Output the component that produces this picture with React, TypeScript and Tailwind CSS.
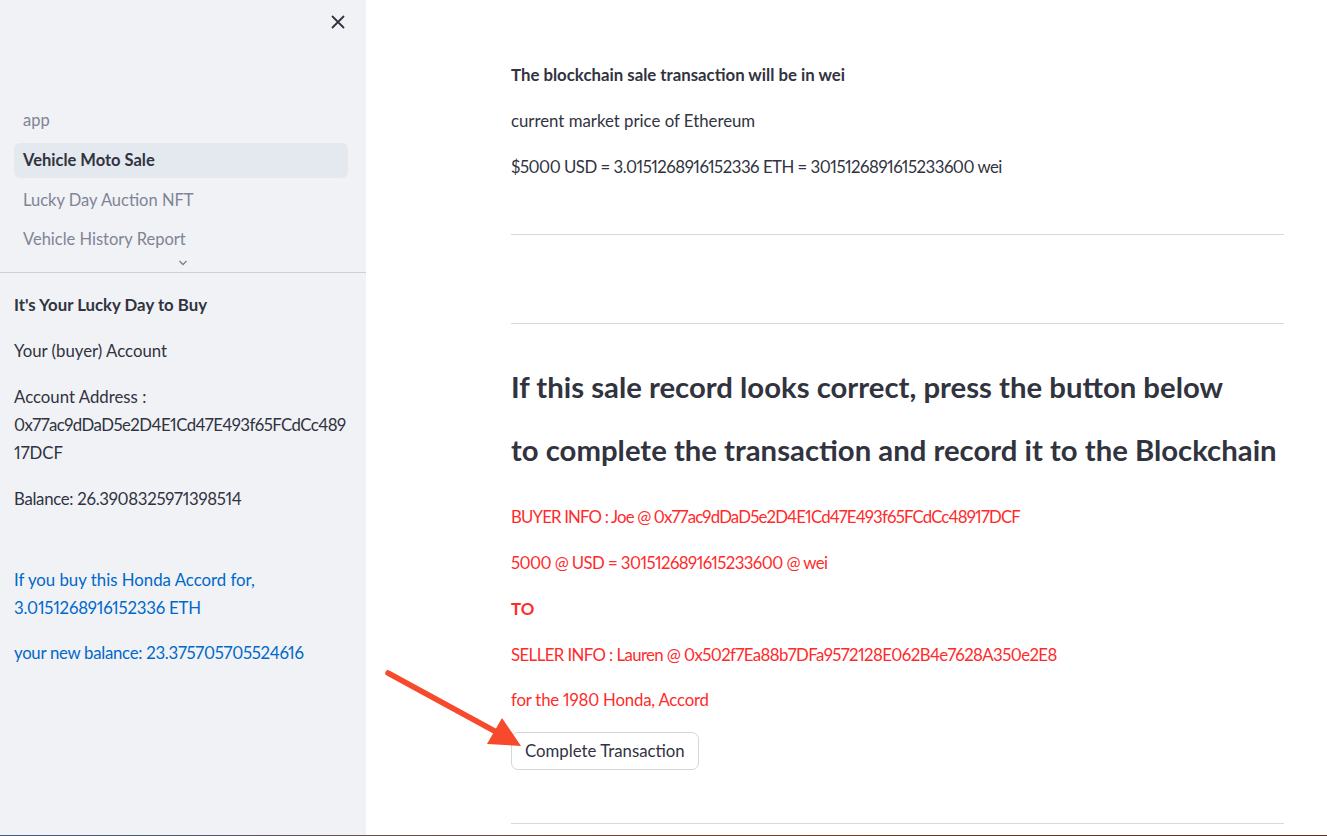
import React from "react";

const font = { fontFamily: '"Source Sans Pro", Lato, "Noto Sans", sans-serif' };

function NavItem({ label, active }: { label: string; active?: boolean }) {
  return (
    <div
      className={
        "h-[35px] flex items-center px-[9px] rounded-[6px] text-[16.5px] " +
        (active ? "bg-[#e4e8ef] text-[#31333f] font-bold" : "text-[#808495]")
      }
    >
      {label}
    </div>
  );
}

export default function App() {
  return (
    <div className="w-[1327px] h-[836px] flex flex-col overflow-hidden bg-white text-[#31333f] proportional-nums" style={font}>
      <div className="relative flex flex-1 min-h-0">
        {/* Sidebar */}
        <aside className="w-[366px] shrink-0 bg-[#f0f2f6] flex flex-col">
          <div className="h-[44px] flex items-center justify-end pr-[20px]">
            <svg width="16" height="16" viewBox="0 0 16 16" fill="none" stroke="#31333f" strokeWidth="1.8" strokeLinecap="round">
              <path d="M2.5 2.5 L13.5 13.5 M13.5 2.5 L2.5 13.5" />
            </svg>
          </div>
          <nav className="mt-[59px] px-[14px] pr-[18px] flex flex-col gap-[4.7px]">
            <NavItem label="app" />
            <NavItem label="Vehicle Moto Sale" active />
            <NavItem label="Lucky Day Auction NFT" />
            <NavItem label="Vehicle History Report" />
          </nav>
          <div className="h-[12px] flex items-center justify-center">
            <svg width="10" height="6" viewBox="0 0 10 6" fill="none" stroke="#7c7f8a" strokeWidth="1.3">
              <path d="M1.5 1 L5 4.5 L8.5 1" />
            </svg>
          </div>
          <div className="border-t border-[#cfd1d6] mt-[3px]" />
          <div className="px-[14px] pt-[18px] text-[16.8px] leading-[28px] flex flex-col">
            <p className="font-bold">It's Your Lucky Day to Buy</p>
            <p className="mt-[18px]">Your (buyer) Account</p>
            <p className="mt-[18px]">
              Account Address :<br />
              <span className="tracking-[-0.55px]">0x77ac9dDaD5e2D4E1Cd47E493f65FCdCc489</span>
              <br />
              17DCF
            </p>
            <p className="mt-[18px] tracking-[-0.3px]">Balance: 26.3908325971398514</p>
            <p className="mt-[53px] text-[#0068c9]">
              If you buy this Honda Accord for,
              <br />
              <span className="tracking-[-0.2px]">3.0151268916152336 ETH</span>
            </p>
            <p className="mt-[17px] text-[#0068c9] tracking-[-0.28px]">your new balance: 23.375705705524616</p>
          </div>
        </aside>

        {/* Main */}
        <main className="flex-1 pl-[145px] pr-[43px] pt-[61px]">
          <div className="flex flex-col text-[16.8px] leading-[28px]">
            <p className="font-bold">The blockchain sale transaction will be in wei</p>
            <p className="mt-[18px]">current market price of Ethereum</p>
            <p className="mt-[18px] tracking-[-0.5px]">$5000 USD = 3.0151268916152336 ETH = 3015126891615233600 wei</p>
            <hr className="mt-[53px] border-0 border-t border-[#d9d9dc]" />
            <hr className="mt-[88px] border-0 border-t border-[#d9d9dc]" />
            <h2 className="mt-[31px] h-[63px] flex items-center text-[29.3px] font-bold whitespace-nowrap">
              If this sale record looks correct, press the button below
            </h2>
            <h2 className="h-[63px] flex items-center text-[29.3px] font-bold whitespace-nowrap">
              to complete the transaction and record it to the Blockchain
            </h2>
            <div className="text-[#ff2b2b] flex flex-col">
              <p className="mt-[22px] tracking-[-0.83px]">BUYER INFO : Joe @ 0x77ac9dDaD5e2D4E1Cd47E493f65FCdCc48917DCF</p>
              <p className="mt-[18px] tracking-[-0.58px]">5000 @ USD = 3015126891615233600 @ wei</p>
              <p className="mt-[18px] font-bold">TO</p>
              <p className="mt-[18px] tracking-[-0.59px]">SELLER INFO : Lauren @ 0x502f7Ea88b7DFa9572128E062B4e7628A350e2E8</p>
              <p className="mt-[17px] tracking-[-0.2px]">for the 1980 Honda, Accord</p>
            </div>
            <div className="mt-[18px]">
              <button className="h-[38px] px-[13px] border border-[#d6d6d9] rounded-[7px] bg-white text-[16.8px] text-[#31333f]">
                Complete Transaction
              </button>
            </div>
            <hr className="mt-[53px] border-0 border-t border-[#d9d9dc]" />
          </div>
        </main>

        {/* Annotation arrow */}
        <svg className="absolute left-0 top-0 pointer-events-none" width="1327" height="835" viewBox="0 0 1327 835">
          <line x1="388" y1="673" x2="500" y2="734" stroke="#f74a2d" strokeWidth="5.5" strokeLinecap="round" />
          <polygon points="521,746 487,744 502,718" fill="#f74a2d" />
        </svg>
      </div>
      <div className="h-[1px] bg-gradient-to-r from-[#3f5d80] via-[#7a3f1f] to-[#6b2a1a]" />
    </div>
  );
}
